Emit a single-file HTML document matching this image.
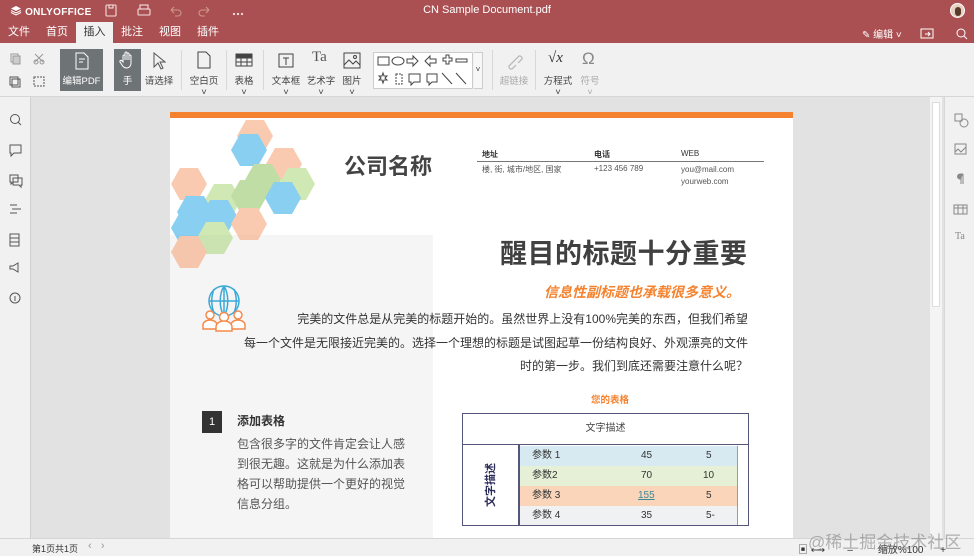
<!DOCTYPE html><html><head><meta charset="utf-8"><style>
*{margin:0;padding:0;box-sizing:border-box}
body{width:974px;height:556px;overflow:hidden;position:relative;font-family:"Liberation Sans","Noto Sans CJK SC",sans-serif;background:#e2e2e2;color:#333}
.a{position:absolute}
.top{left:0;top:0;width:974px;height:43px;background:#ab5052;color:#fff}
.tab{position:absolute;top:22px;height:21px;font-size:11px;line-height:20px;color:#fff;text-align:center}
.tb{left:0;top:43px;width:974px;height:54px;background:#f1f1f1;border-bottom:1px solid #d6d6d6}
.lbl{position:absolute;font-size:9.5px;color:#444;text-align:center;white-space:nowrap}
.sep{position:absolute;top:50px;width:1px;height:40px;background:#d8d8d8}
.ls{left:0;top:97px;width:31px;height:441px;background:#f1f1f1;border-right:1px solid #d0d0d0}
.rs{left:944px;top:97px;width:30px;height:441px;background:#f1f1f1;border-left:1px solid #d8d8d8}
.page{left:170px;top:112px;width:623px;height:426px;background:#fff;overflow:hidden}
.sb{left:0;top:538px;width:974px;height:18px;background:#f1f1f1;border-top:1px solid #d6d6d6;font-size:9px}
</style></head><body>
<div class="a top">
 <div class="a" style="left:10px;top:5px;font-size:10px;font-weight:bold;letter-spacing:.3px">
 <svg width="12" height="11" style="vertical-align:-1px"><path d="M6 1L11 3.5 6 6 1 3.5Z" fill="#fff"/><path d="M1 5.5L6 8 11 5.5M1 7.5L6 10 11 7.5" stroke="#fff" fill="none"/></svg> ONLYOFFICE</div>
 <svg class="a" style="left:105px;top:4px" width="140" height="14" fill="none" stroke="#f3dede" stroke-width="1.1"><rect x="1" y="1" width="10" height="11" rx="1"/><rect x="4" y="1" width="4" height="3"/><rect x="33" y="5" width="12" height="6" rx="1"/><rect x="35" y="1" width="8" height="4"/><path d="M66 6h7a3 3 0 010 6h-3M66 6l3-3M66 6l3 3" stroke="#c98"/><path d="M104 6h-7a3 3 0 000 6h3M104 6l-3-3M104 6l-3 3" stroke="#c98"/><circle cx="129" cy="10" r=".6" fill="#fff"/><circle cx="133" cy="10" r=".6" fill="#fff"/><circle cx="137" cy="10" r=".6" fill="#fff"/></svg>
 <div class="a" style="left:0;width:974px;top:4px;text-align:center;font-size:11px">CN Sample Document.pdf</div>
 <div class="a" style="left:950px;top:3px;width:15px;height:15px;border-radius:50%;background:#e8d0c0;border:1px solid #fff"><div style="margin:3px 0 0 4px;width:6px;height:9px;border-radius:3px;background:#5a3a2a"></div></div>
 <div class="tab" style="left:0;width:38px">文件</div>
 <div class="tab" style="left:38px;width:38px">首页</div>
 <div class="tab" style="left:76px;width:37px;background:#f1f1f1;color:#333">插入</div>
 <div class="tab" style="left:113px;width:38px">批注</div>
 <div class="tab" style="left:151px;width:38px">视图</div>
 <div class="tab" style="left:189px;width:38px">插件</div>
 <div class="a" style="left:862px;top:26px;font-size:10px">✎ 编辑 ˅</div>
 <svg class="a" style="left:920px;top:27px" width="50" height="13" fill="none" stroke="#fff"><rect x="1" y="2" width="12" height="9"/><path d="M5 7h5M8 5l2 2-2 2"/><circle cx="41" cy="6" r="4"/><path d="M44 9l3 3"/></svg>
</div>
<div class="a tb">
 <svg class="a" style="left:8px;top:8px" width="40" height="40" fill="none" stroke="#999"><rect x="3" y="3" width="7" height="8"/><rect x="5" y="5" width="7" height="8" fill="#ccc"/><path d="M27 3l8 8M35 3l-8 8"/><circle cx="28" cy="11" r="2"/><circle cx="34" cy="11" r="2"/><rect x="4" y="28" width="8" height="8" stroke="#555"/><rect x="2" y="26" width="8" height="8" stroke="#555"/><rect x="26" y="26" width="10" height="9" stroke-dasharray="2 1" stroke="#555"/></svg>
 <div class="a" style="left:60px;top:6px;width:43px;height:42px;background:#6e7376"></div>
 <svg class="a" style="left:74px;top:9px" width="16" height="18" fill="none" stroke="#fff"><path d="M2 1h8l4 4v12H2z"/><path d="M5 7h6M5 10h4"/></svg>
 <div class="lbl" style="left:60px;top:30px;width:43px;color:#fff">编辑PDF</div>
 <div class="a" style="left:114px;top:6px;width:27px;height:42px;background:#6e7376"></div>
 <svg class="a" style="left:119px;top:8px" width="16" height="18" fill="none" stroke="#fff"><path d="M4 11V5a1 1 0 012 0v4V2a1 1 0 012 0v7V3a1 1 0 012 0v6V5a1 1 0 012 0v7c0 3-2 5-4 5s-4-1-5-3l-2-3a1 1 0 012-1z"/></svg>
 <div class="lbl" style="left:114px;top:30px;width:27px;color:#fff">手</div>
 <svg class="a" style="left:152px;top:9px" width="14" height="18" fill="none" stroke="#555"><path d="M2 1v14l4-4 3 6 2-1-3-6h5z"/></svg>
 <div class="lbl" style="left:143px;top:30px;width:32px">请选择</div>
 <div class="sep" style="left:181px;top:7px"></div>
 <svg class="a" style="left:197px;top:8px" width="14" height="18" fill="none" stroke="#444"><path d="M1 1h8l4 4v12H1z"/></svg>
 <div class="lbl" style="left:187px;top:30px;width:34px">空白页<br>˅</div>
 <div class="sep" style="left:226px;top:7px"></div>
 <svg class="a" style="left:235px;top:10px" width="18" height="14" fill="none" stroke="#444"><rect x="1" y="1" width="16" height="12"/><path d="M1 5h16M1 9h16M6 1v12M12 1v12" /><rect x="1" y="1" width="16" height="4" fill="#444"/></svg>
 <div class="lbl" style="left:230px;top:30px;width:28px">表格<br>˅</div>
 <div class="sep" style="left:263px;top:7px"></div>
 <svg class="a" style="left:277px;top:9px" width="18" height="17" fill="none" stroke="#444"><rect x="2" y="2" width="14" height="13"/><path d="M6 6h6M9 6v7"/></svg>
 <div class="lbl" style="left:270px;top:30px;width:32px">文本框<br>˅</div>
 <div class="a" style="left:312px;top:6px;font-size:15px;color:#555;font-family:'Liberation Serif'">Ta</div>
 <div class="lbl" style="left:305px;top:30px;width:32px">艺术字<br>˅</div>
 <svg class="a" style="left:343px;top:9px" width="18" height="17" fill="none" stroke="#444"><rect x="1" y="1" width="16" height="15"/><path d="M1 13l5-5 4 4 3-3 4 4"/><circle cx="12" cy="5" r="1.5"/></svg>
 <div class="lbl" style="left:338px;top:30px;width:28px">图片<br>˅</div>
 <div class="a" style="left:373px;top:9px;width:100px;height:37px;background:#fff;border:1px solid #ccc"></div>
 <svg class="a" style="left:376px;top:11px" width="96" height="34" fill="none" stroke="#444"><rect x="2" y="3" width="11" height="8"/><ellipse cx="22" cy="7" rx="6" ry="4"/><path d="M31 5h6V2l5 5-5 5V9h-6z"/><path d="M60 5h-6V2l-5 5 5 5V9h6z"/><path d="M67 4h3V1h3v3h3v3h-3v3h-3V7h-3z"/><rect x="80" y="5" width="11" height="3"/><path d="M3 22l2 2-2 2 3 0 1 3 1-3 3 0-2-2 2-2-3 0-1-3-1 3z"/><path d="M20 20h6v10h-6z" stroke-dasharray="2 1"/><path d="M33 20h11v8h-6l-3 3v-3h-2z"/><path d="M51 20h10v8h-5l-3 3v-3h-2z"/><path d="M66 19l10 11M80 19l10 11"/></svg>
 <div class="a" style="left:474px;top:9px;width:9px;height:37px;border:1px solid #ccc;border-left:none;font-size:8px;text-align:center;line-height:34px;background:#f7f7f7">˅</div>
 <div class="sep" style="left:492px;top:7px"></div>
 <svg class="a" style="left:505px;top:9px" width="18" height="18" fill="none" stroke="#bbb" stroke-width="1.3"><path d="M8 10l6-6a2.5 2.5 0 013 3l-4 4M10 8l-6 6a2.5 2.5 0 003 3l4-4"/></svg>
 <div class="lbl" style="left:498px;top:30px;width:32px;color:#aaa">超链接</div>
 <div class="sep" style="left:535px;top:7px"></div>
 <div class="a" style="left:548px;top:7px;font-size:15px;font-family:'Liberation Serif';font-style:italic;color:#333">√x</div>
 <div class="lbl" style="left:542px;top:30px;width:32px">方程式<br>˅</div>
 <div class="a" style="left:582px;top:6px;font-size:17px;color:#888">Ω</div>
 <div class="lbl" style="left:578px;top:30px;width:24px;color:#aaa">符号<br>˅</div>
</div>
<div class="a ls"><svg width="31" height="220" fill="none" stroke="#555"><circle cx="15" cy="22" r="4.5"/><path d="M18 25l3 3"/><path d="M10 48h11v8h-7l-3 3v-3h-1z"/><path d="M10 78h8v7H13l-2 2v-2h-1zM13 81h9v7h-1v2l-2-2h-6z"/><path d="M10 108h7M12 112h9M10 116h7"/><rect x="10" y="137" width="9" height="12"/><path d="M10 141h9M10 145h9"/><path d="M10 169h3l5-3v9l-5-3h-3z"/><circle cx="15" cy="201" r="5"/><path d="M15 199v5"/></svg></div>
<div class="a" style="left:930px;top:97px;width:12px;height:441px;background:#f4f4f4"><div style="margin:5px 2px;height:205px;background:#fff;border:1px solid #ddd"></div></div>
<div class="a rs"><svg width="30" height="160" fill="none" stroke="#888"><rect x="10" y="17" width="7" height="7"/><circle cx="19" cy="26" r="4"/><rect x="10" y="47" width="11" height="10"/><path d="M10 55l3-3 3 3 5-5"/><path d="M16 77v10M18 77v10M18 77h-3a2.5 2.5 0 000 5h1" fill="#888"/><rect x="9" y="108" width="13" height="9"/><path d="M9 111h13M13 108v9M18 108v9"/><text x="10" y="142" font-size="10" fill="#888" stroke="none" font-family="Liberation Serif">Ta</text></svg></div>
<div class="a page">
 <div class="a" style="left:0;top:0;width:623px;height:6px;background:#f5822e"></div>
 <div class="a" style="left:0;top:123px;width:263px;height:310px;background:#f5f5f5"></div>
 <svg class="a" style="left:0;top:0" width="160" height="165">
  <g opacity=".55">
   <polygon points="76,8 94,8 103,24 94,40 76,40 67,24" fill="#f5a070"/>
   <polygon points="70,22 88,22 97,38 88,54 70,54 61,38" fill="#2aa9e6"/>
   <polygon points="105,36 123,36 132,52 123,68 105,68 96,52" fill="#f5a070"/>
   <polygon points="84,52 102,52 111,68 102,84 84,84 75,68" fill="#8cc35a"/>
   <polygon points="118,56 136,56 145,72 136,88 118,88 109,72" fill="#a9d678"/>
   <polygon points="10,56 28,56 37,72 28,88 10,88 1,72" fill="#f5a070"/>
   <polygon points="44,72 62,72 71,88 62,104 44,104 35,88" fill="#a9d678"/>
   <polygon points="70,68 88,68 97,84 88,100 70,100 61,84" fill="#8cc35a"/>
   <polygon points="104,70 122,70 131,86 122,102 104,102 95,86" fill="#2aa9e6"/>
   <polygon points="16,84 34,84 43,100 34,116 16,116 7,100" fill="#2aa9e6"/>
   <polygon points="40,88 58,88 67,104 58,120 40,120 31,104" fill="#2aa9e6"/>
   <polygon points="70,96 88,96 97,112 88,128 70,128 61,112" fill="#f5a070"/>
   <polygon points="10,100 28,100 37,116 28,132 10,132 1,116" fill="#2aa9e6"/>
   <polygon points="36,110 54,110 63,126 54,142 36,142 27,126" fill="#a9d678"/>
   <polygon points="10,124 28,124 37,140 28,156 10,156 1,140" fill="#f5a070"/>
  </g>
 </svg>
 <div class="a" style="left:174px;top:37px;font-size:22px;font-weight:bold;color:#444">公司名称</div>
 <div class="a" style="left:312px;top:37px;font-size:8px;font-weight:bold">地址</div>
 <div class="a" style="left:424px;top:37px;font-size:8px;font-weight:bold">电话</div>
 <div class="a" style="left:511px;top:37px;font-size:8px">WEB</div>
 <div class="a" style="left:307px;top:49px;width:287px;height:1px;background:#777"></div>
 <div class="a" style="left:312px;top:52px;font-size:8px;color:#555">楼, 街, 城市/地区, 国家</div>
 <div class="a" style="left:424px;top:52px;font-size:8px;color:#555">+123 456 789</div>
 <div class="a" style="left:511px;top:52px;font-size:8px;color:#555;line-height:12px">you@mail.com<br>yourweb.com</div>
 <div class="a" style="left:330px;top:120px;font-size:27px;font-weight:bold;color:#404040;letter-spacing:.5px">醒目的标题十分重要</div>
 <div class="a" style="left:374px;top:170px;font-size:14px;font-weight:bold;font-style:italic;color:#f5822e">信息性副标题也承载很多意义。</div>
 <svg class="a" style="left:30px;top:172px" width="48" height="48" fill="none" stroke-width="1.5"><circle cx="24" cy="17" r="15" stroke="#3aa9d8"/><path d="M9 17h30M24 2v30M14 5c-3 8-3 16 0 24M34 5c3 8 3 16 0 24M24 2c-5 8-5 22 0 30M24 2c5 8 5 22 0 30" stroke="#3aa9d8"/><g stroke="#f58a4a" fill="#fff"><circle cx="10" cy="31" r="4"/><path d="M3 45v-4a7 5 0 0114 0v4z"/><circle cx="38" cy="31" r="4"/><path d="M31 45v-4a7 5 0 0114 0v4z"/><circle cx="24" cy="33" r="4.5"/><path d="M16 47v-4a8 6 0 0116 0v4z"/></g></svg>
 <div class="a" style="left:40px;top:196px;width:538px;font-size:12px;line-height:23.5px;color:#333;text-align:right;white-space:nowrap">完美的文件总是从完美的标题开始的。虽然世界上没有100%完美的东西，但我们希望<br>每一个文件是无限接近完美的。选择一个理想的标题是试图起草一份结构良好、外观漂亮的文件<br>时的第一步。我们到底还需要注意什么呢？</div>
 <div class="a" style="left:32px;top:299px;width:20px;height:22px;background:#333;color:#fff;font-size:11px;text-align:center;line-height:22px">1</div>
 <div class="a" style="left:67px;top:300px;font-size:12px;font-weight:bold;color:#333">添加表格</div>
 <div class="a" style="left:67px;top:322px;width:170px;font-size:12px;line-height:20px;color:#555">包含很多字的文件肯定会让人感到很无趣。这就是为什么添加表格可以帮助提供一个更好的视觉信息分组。</div>
 <div class="a" style="left:421px;top:280px;font-size:9.5px;font-weight:bold;color:#f5822e">您的表格</div>
 <div class="a" style="left:292px;top:301px;width:287px;height:113px;border:1.5px solid #55557a;background:#fff">
  <div class="a" style="left:0;top:0;width:285px;height:31px;border-bottom:1.5px solid #55557a;text-align:center;line-height:30px;font-size:10px;color:#444">文字描述</div>
  <div class="a" style="left:55px;top:31px;width:1.5px;height:80px;background:#55557a"></div>
  <div class="a" style="left:-2px;top:64px;width:60px;height:14px;transform:rotate(-90deg);font-size:11px;font-weight:bold;color:#2d2d5a;line-height:14px;text-align:center">文字描述</div>
  <div class="a" style="left:57px;top:32px;width:218px;height:79px;border-right:1px solid #7aa">
   <div style="height:20px;background:#d7eaf1;font-size:10px;line-height:20px;position:relative"><span class="a" style="left:12px">参数 1</span><span class="a" style="left:121px">45</span><span class="a" style="left:186px">5</span></div>
   <div style="height:20px;background:#e6f0d7;font-size:10px;line-height:20px;position:relative"><span class="a" style="left:12px">参数2</span><span class="a" style="left:121px">70</span><span class="a" style="left:183px">10</span></div>
   <div style="height:20px;background:#fad5ba;font-size:10px;line-height:20px;position:relative"><span class="a" style="left:12px">参数 3</span><span class="a" style="left:118px;color:#3a8a9a;text-decoration:underline">155</span><span class="a" style="left:186px">5</span></div>
   <div style="height:19px;background:#eff1f3;font-size:10px;line-height:19px;position:relative"><span class="a" style="left:12px">参数 4</span><span class="a" style="left:121px">35</span><span class="a" style="left:186px">5-</span></div>
  </div>
 </div>
</div>
<div class="a sb"><span class="a" style="left:32px;top:3px">第1页共1页</span><span class="a" style="left:88px;top:1px;color:#999;font-size:11px">‹ &nbsp; ›</span>
<span class="a" style="left:798px;top:2px;font-size:10px;color:#333">▣ ⟷ &nbsp;&nbsp;&nbsp;&nbsp;&nbsp;&nbsp; – &nbsp;&nbsp;&nbsp;&nbsp;&nbsp;&nbsp;&nbsp; 缩放%100 &nbsp;&nbsp;&nbsp;&nbsp; +</span>
<span class="a" style="left:808px;top:-11px;font-size:17px;color:rgba(120,120,120,.55)">@稀土掘金技术社区</span></div>
</body></html>
